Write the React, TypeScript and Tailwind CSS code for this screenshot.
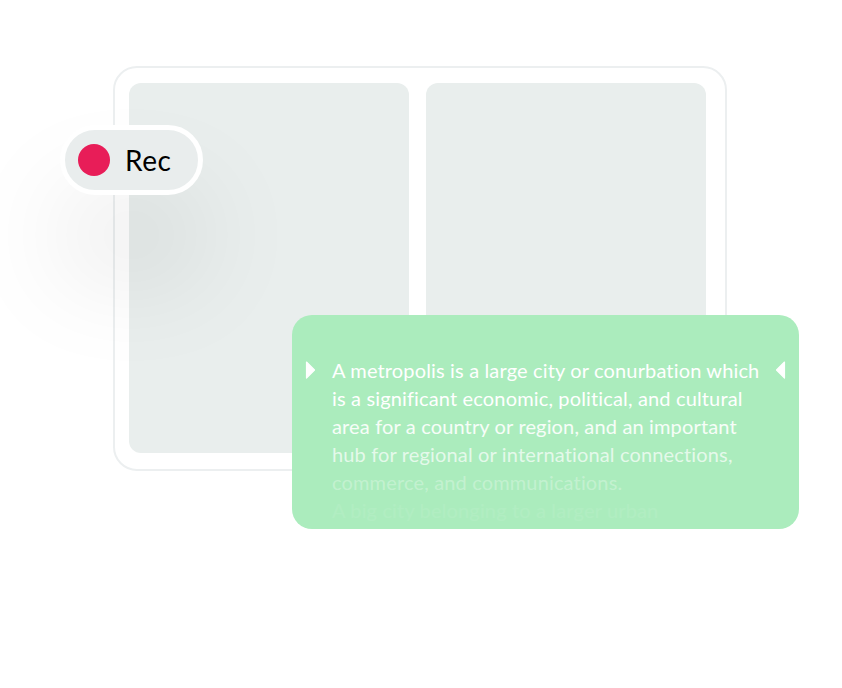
const lines = [
  { text: "A metropolis is a large city or conurbation which", cls: "text-white" },
  { text: "is a significant economic, political, and cultural", cls: "text-white" },
  { text: "area for a country or region, and an important", cls: "text-white/90" },
  { text: "hub for regional or international connections,", cls: "text-white/70" },
  { text: "commerce, and communications.", cls: "text-white/30" },
  { text: "A big city belonging to a larger urban", cls: "text-white/[0.07]" },
];

function Arrow({ dir }: { dir: "right" | "left" }) {
  return (
    <svg width="11" height="18" viewBox="0 0 11 18" className="shrink-0">
      {dir === "right" ? (
        <path d="M1.5 1 L9.5 9 L1.5 17 Z" fill="white" stroke="white" strokeWidth="1.2" strokeLinejoin="round" />
      ) : (
        <path d="M9.5 1 L1.5 9 L9.5 17 Z" fill="white" stroke="white" strokeWidth="1.2" strokeLinejoin="round" />
      )}
    </svg>
  );
}

export default function App() {
  return (
    <div
      className="relative w-[842px] h-[688px] bg-white overflow-hidden"
      style={{ fontFamily: "Lato, 'Open Sans', sans-serif" }}
    >
      {/* window frame with two panes */}
      <div className="ml-[113px] mt-[66px] w-[614px] h-[405px] rounded-[24px] border-2 border-[#eceff0] bg-white pt-[15px] pl-[14px] flex gap-[17px]">
        <div className="w-[280px] h-[370px] rounded-[12px] bg-[#e9eeed]" />
        <div className="w-[280px] h-[370px] rounded-[12px] bg-[#e9eeed]" />
      </div>

      {/* Rec pill */}
      <div className="absolute left-[60px] top-[125px] w-[143px] h-[70px] rounded-full border-[5px] border-white bg-[#e9eded] flex items-center pl-[13px] gap-[15px] shadow-[0_75px_110px_0_rgba(0,0,0,0.115)]">
        <div className="w-[32px] h-[32px] rounded-full bg-[#e81d58]" />
        <span className="text-[28px] leading-none tracking-[0.5px] text-black">Rec</span>
      </div>

      {/* caption card */}
      <div className="absolute left-[292px] top-[315px] w-[507px] h-[214px] rounded-[20px] bg-[#abecbd] overflow-hidden pt-[41px] pl-[13px] flex items-start">
        <div className="h-[28px] flex items-center w-[27px]">
          <Arrow dir="right" />
        </div>
        <div className="w-[443px] text-[20px] leading-[28px] tracking-[0.15px]">
          {lines.map((l) => (
            <div key={l.text} className={`whitespace-nowrap ${l.cls}`}>
              {l.text}
            </div>
          ))}
        </div>
        <div className="h-[28px] flex items-center">
          <Arrow dir="left" />
        </div>
      </div>
    </div>
  );
}
